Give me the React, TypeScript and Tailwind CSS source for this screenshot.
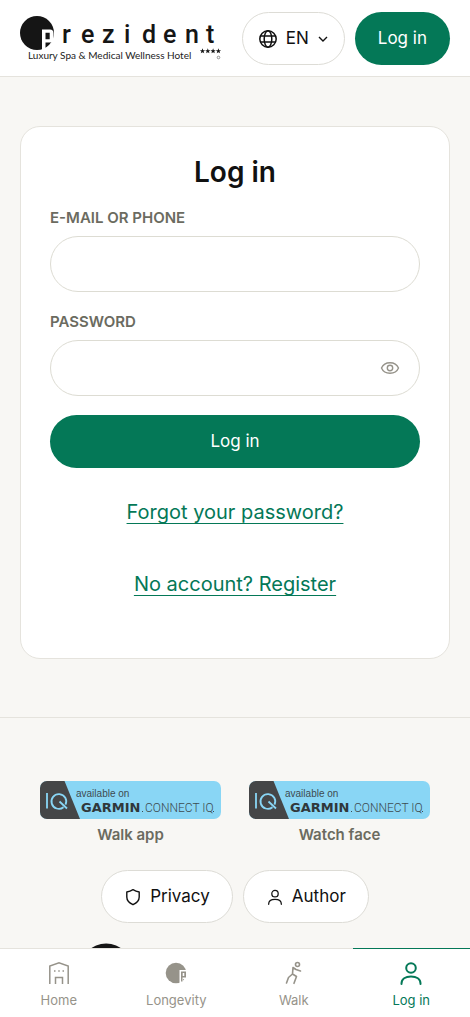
import React, { useState } from 'react';

const LogoMark = () => (
  <>
    <circle cx="17" cy="18" r="17" fill="#151515" />
    {/* the letter p cut out of the disc */}
    <path
      fillRule="evenodd"
      d="M22 35V14.500H30a3.500 3.500 0 0 1 3.500 3.500V24a3.500 3.500 0 0 1-3.500 3.500h-4.500V35zM25.500 17.800v6.400h4.200v-6.400z"
      fill="#fff"
    />
  </>
);

const Logo: React.FC<{ className?: string }> = ({ className }) => (
  <svg viewBox="0 0 202 47" className={className} role="img" aria-label="Prezident">
    <LogoMark />
    <text x="42 61 82 104 122 143 165 186" y="28" fill="#151515" className="font-['Roboto',sans-serif] text-[25px] font-medium">
      rezident
    </text>
    <text x="8" y="44" fill="#222" className="font-['Lato',sans-serif] text-[10px]">
      Luxury Spa &amp; Medical Wellness Hotel
    </text>
    {[182.500, 187.800, 193.100, 198.400].map((x) => (
      <path
        key={x}
        transform={`translate(${x} 36)`}
        d="M0-2.700.7-.8 2.600-.8 1.100.4 1.700 2.300 0 1.200-1.700 2.300-1.100.4-2.600-.8-.7-.8z"
        fill="#151515"
      />
    ))}
    <circle cx="198.500" cy="42.500" r="1.300" fill="none" stroke="#555" strokeWidth=".6" />
  </svg>
);

const GarminBadge: React.FC<{ label: string }> = ({ label }) => (
  <a href="#" className="flex flex-col items-center gap-[5px] text-[15px] leading-[22px] font-semibold text-[#6b6b60]">
    <svg viewBox="0 0 181 38" className="w-[181px]" role="img" aria-label="Available on Garmin Connect IQ">
      <rect width="181" height="38" rx="7" fill="#89d6f5" />
      <path d="M7 0h17.500L40 38H7a7 7 0 0 1-7-7V7a7 7 0 0 1 7-7z" fill="#454647" />
      <g fill="none" stroke="#89d6f5" strokeWidth="1.800">
        <path d="M7 12v15.500" />
        <path d="M23.500 26.200a7.400 7.400 0 1 1 2-2.500M19.500 20.500l7.500 7" />
      </g>
      <text x="36" y="16" fill="#3d4b50" className="font-['Liberation_Sans',sans-serif] text-[10px] font-normal">
        available on
      </text>
      <text x="41" y="31" fill="#30383b" className="font-['DejaVu_Sans',sans-serif] text-[13px] font-bold">
        GARMIN
      </text>
      <text x="105" y="31" fill="#3d4b50" className="font-['Roboto',sans-serif] text-[12px] font-light">
        CONNECT IQ
      </text>
      <path d="M102 30.500h1M173 30.500h1" stroke="#3d4b50" />
    </svg>
    {label}
  </a>
);

const PersonIcon: React.FC<{ className?: string; strokeWidth?: number }> = ({ className, strokeWidth = 2 }) => (
  <svg viewBox="0 0 24 24" className={className} fill="none" stroke="currentColor" strokeWidth={strokeWidth} strokeLinecap="round">
    <circle cx="12" cy="7" r="4.800" />
    <path d="M2.500 23v-.5C2.500 18 6.500 15.500 12 15.500s9.500 2.500 9.500 7v.5" />
  </svg>
);

const HomeIcon = () => (
  <svg viewBox="0 0 24 24" className="size-6" fill="none" stroke="currentColor" strokeWidth="1.500">
    <path d="M2.800 23V5L12 1.800 21.200 5v18M8.500 23v-6.500h7V23" />
    <path d="M7 10h1.500M11.250 10h1.500M15.500 10H17" />
  </svg>
);

const LongevityIcon = () => (
  <svg viewBox="0 0 24 24" className="size-6">
    <circle cx="12" cy="12" r="10.300" fill="currentColor" />
    <path d="M15.500 9H23v9h-4v5h-3.500z" fill="#fff" />
    <path d="M17 10.500h5v6h-3.500v4H17zM18.700 12v3h1.600v-3z" fillRule="evenodd" fill="currentColor" />
  </svg>
);

const WalkIcon = () => (
  <svg viewBox="0 0 24 24" className="size-6" fill="none" stroke="currentColor" strokeWidth="1.600" strokeLinejoin="round" strokeLinecap="round">
    <circle cx="15.500" cy="3.500" r="2" />
    <path d="M18.500 10l-4.500-1.500L11 6.500l-.5 6.500-4 3.500-2 5.500M10.500 13l4 2.500-2.500 6.800" />
  </svg>
);

const navItems = [
  { label: 'Home', icon: <HomeIcon /> },
  { label: 'Longevity', icon: <LongevityIcon /> },
  { label: 'Walk', icon: <WalkIcon /> },
  { label: 'Log in', icon: <PersonIcon className="size-6" />, active: true },
];

const App: React.FC = () => {
  const [showPassword, setShowPassword] = useState(false);

  return (
    <div className="h-dvh flex flex-col bg-[#f8f7f4] text-[#111] font-['Inter',sans-serif]">
      <div className="flex-1 min-h-0 overflow-y-auto [scrollbar-width:none]">
        <header className="flex items-center justify-between bg-white border-b border-[#e5e3dd] px-5 pt-3 pb-[11px]">
          <Logo className="w-[202px] shrink-0" />
          <div className="flex gap-2.5">
            <button className="flex h-[53px] items-center gap-2 rounded-full border border-[#dddcd6] px-[15px] text-[17px]">
              <svg viewBox="0 0 20 20" className="size-5" fill="none" stroke="currentColor" strokeWidth="1.500">
                <circle cx="10" cy="10" r="8.200" />
                <ellipse cx="10" cy="10" rx="3.800" ry="8.200" />
                <path d="M2.500 7h15M2.500 13h15" />
              </svg>
              EN
              <svg viewBox="0 0 12 12" className="size-3" fill="none" stroke="currentColor" strokeWidth="1.400">
                <path d="M2 4l4 4 4-4" />
              </svg>
            </button>
            <button className="h-[53px] rounded-full bg-[#047857] px-[23px] pt-px text-[17px] text-white">Log in</button>
          </div>
        </header>

        <main className="px-5 pt-[49px] pb-[58px]">
          <form
            onSubmit={(e) => e.preventDefault()}
            className="flex flex-col rounded-[20px] border border-[#e5e3dd] bg-white px-[29px] pt-[27px] pb-[60px]"
          >
            <h1 className="text-center text-[28px] leading-9 font-semibold">Log in</h1>
            <label htmlFor="login" className="mt-[18px] text-[15px] leading-5 font-semibold text-[#6b6b60]">
              E-MAIL OR PHONE
            </label>
            <input id="login" type="text" className="mt-2 h-14 w-full rounded-full border border-[#dddcd3] px-5" />
            <label htmlFor="password" className="mt-5 text-[15px] leading-5 font-semibold text-[#6b6b60]">
              PASSWORD
            </label>
            <div className="relative mt-2">
              <input
                id="password"
                type={showPassword ? 'text' : 'password'}
                className="block h-14 w-full rounded-full border border-[#dddcd3] pl-5 pr-14"
              />
              <button
                type="button"
                aria-label="Show password"
                onClick={() => setShowPassword(!showPassword)}
                className="absolute inset-y-0 right-5 text-[#96938a]"
              >
                <svg viewBox="0 0 20 20" className="size-5" fill="none" stroke="currentColor" strokeWidth="1.400">
                  <path d="M1.500 10C3 6.500 6 4.700 10 4.700s7 1.800 8.500 5.300c-1.500 3.500-4.500 5.300-8.500 5.300S3 13.500 1.500 10z" />
                  <circle cx="10" cy="10" r="2.700" />
                </svg>
              </button>
            </div>
            <button type="submit" className="mt-[19px] h-[53px] rounded-full bg-[#047857] pt-px text-[17px] text-white">
              Log in
            </button>
            <div className="mt-[30px] flex flex-col items-center gap-11 text-xl text-[#047857]">
              <a href="#" className="underline decoration-1 underline-offset-4">Forgot your password?</a>
              <a href="#" className="underline decoration-1 underline-offset-4">No account? Register</a>
            </div>
          </form>
        </main>

        <footer className="flex flex-col items-center border-t border-[#e5e3dd] px-5 pt-[63px] pb-12">
          <div className="flex gap-7">
            <GarminBadge label="Walk app" />
            <GarminBadge label="Watch face" />
          </div>
          <div className="mt-6 flex gap-2.5">
            <a href="#" className="flex h-[53px] items-center gap-2 rounded-full border border-[#dddcd6] bg-white px-[22px] text-[17px]">
              <svg viewBox="0 0 18 18" className="size-[18px]" fill="none" stroke="currentColor" strokeWidth="1.400" strokeLinejoin="round">
                <path d="M9 1.700C7 3 5 3.700 2.800 4v5c0 4 2.500 6 6.200 7.700 3.700-1.700 6.200-3.700 6.200-7.700V4C13 3.700 11 3 9 1.700z" />
              </svg>
              Privacy
            </a>
            <a href="#" className="flex h-[53px] items-center gap-2 rounded-full border border-[#dddcd6] bg-white px-[22px] text-[17px]">
              <PersonIcon className="size-[18px] p-px" strokeWidth={1.900} />
              Author
            </a>
          </div>
          <svg viewBox="0 0 202 47" className="mt-[19px] w-[310px]" aria-hidden="true">
            <LogoMark />
          </svg>
        </footer>
      </div>

      <nav className="flex shrink-0 bg-white">
        {navItems.map((item) => (
          <a
            key={item.label}
            href="#"
            className={`flex h-[69px] flex-1 flex-col items-center gap-[5px] border-t pt-3 text-[13px] leading-5 ${
              item.active ? 'border-[#047857] text-[#047857]' : 'border-[#e5e3dd] text-[#96938a]'
            }`}
          >
            {item.icon}
            {item.label}
          </a>
        ))}
      </nav>
    </div>
  );
};

export default App;
